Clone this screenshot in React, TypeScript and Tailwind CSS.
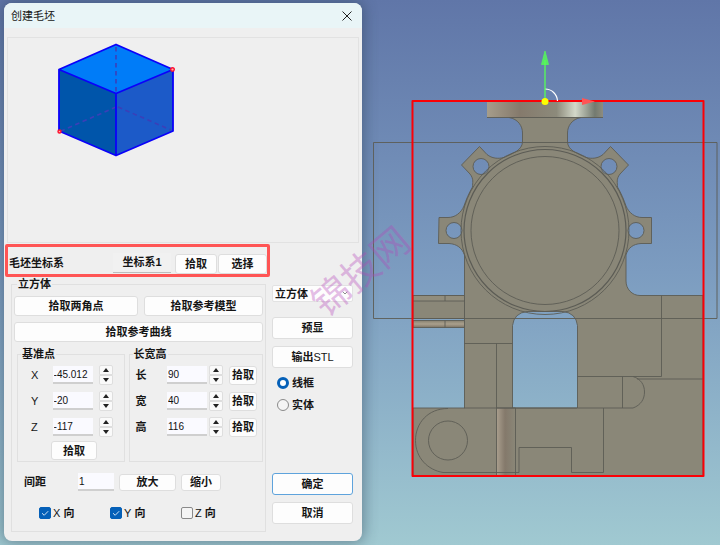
import { useState } from "react";
import type { ReactNode } from "react";
import { ChevronDown } from "lucide-react";
import clsx from "clsx";

type ButtonProps = {
  children: ReactNode;
  className?: string;
  primary?: boolean;
};

function Button({ children, className, primary }: ButtonProps) {
  return (
    <button
      type="button"
      className={clsx(
        "flex items-center justify-center rounded-[3px] border bg-[#fdfdfd] whitespace-nowrap",
        primary ? "border-[#5ea3dc]" : "border-[#dedede]",
        className,
      )}
    >
      {children}
    </button>
  );
}

type NumberFieldProps = {
  id: string;
  value: string;
  onChange: (value: string) => void;
  className?: string;
};

function NumberField({ id, value, onChange, className }: NumberFieldProps) {
  return (
    <input
      id={id}
      type="text"
      value={value}
      onChange={(e) => onChange(e.target.value)}
      className={clsx(
        "h-[18px] min-w-0 border-b-2 border-[#cfcfcf] bg-[#fafaff] px-px font-['Liberation_Sans_Narrow','Liberation_Sans',sans-serif] text-[10px] leading-4 font-normal text-[#111] outline-none",
        className,
      )}
    />
  );
}

function Spinner({ label, onStep }: { label: string; onStep: (delta: number) => void }) {
  return (
    <div className="flex h-5 w-[14px] shrink-0 flex-col">
      <button
        type="button"
        aria-label={`${label} +`}
        onClick={() => onStep(1)}
        className="flex flex-1 items-center justify-center rounded-t-[2px] border border-[#dedede] bg-[#fafafa]"
      >
        <svg viewBox="0 0 6 4" className="h-1 w-1.5">
          <path d="M0 4 3 0 6 4z" fill="#222" />
        </svg>
      </button>
      <button
        type="button"
        aria-label={`${label} -`}
        onClick={() => onStep(-1)}
        className="flex flex-1 items-center justify-center rounded-b-[2px] border border-[#dedede] bg-[#fafafa]"
      >
        <svg viewBox="0 0 6 4" className="h-1 w-1.5">
          <path d="M0 0 3 4 6 0z" fill="#222" />
        </svg>
      </button>
    </div>
  );
}

function Group({ title, children, className }: { title: string; children: ReactNode; className?: string }) {
  return (
    <fieldset className={clsx("min-w-0 border border-[#e0e0e0]", className)}>
      <legend className="ml-[3px] h-[14px] px-px leading-[14px]">{title}</legend>
      {children}
    </fieldset>
  );
}

function CubePreview() {
  return (
    <svg viewBox="50 40 130 120" className="mt-0.5 ml-[42px] h-[120px] w-[130px]">
      <path d="M59 69.5 116 44.5 173 69.5 116 93.5z" fill="#007cf8" />
      <path d="M59 69.5 116 93.5V155.5L59 131z" fill="#0055aa" />
      <path d="M116 93.5 173 69.5V131L116 155.5z" fill="#1c5ac8" />
      <path d="M116 47V93M116 107 61 131M118 107 171 130" stroke="#3b3fb8" strokeWidth="1.6" strokeDasharray="4.500 3.500" fill="none" />
      <path
        d="M116 44.500 173 69.500V131L116 155.500 59 131V69.500zM59 69.500 116 93.500 173 69.500M116 93.500V155.500"
        fill="none"
        stroke="#0a00fa"
        strokeWidth="1.800"
        strokeLinejoin="round"
      />
      <circle cx="172.500" cy="69.500" r="1.800" fill="#ffb0a0" stroke="#ff1030" strokeWidth="1.400" />
      <circle cx="59.500" cy="131.500" r="1.500" fill="#ffb0a0" stroke="#ff1030" strokeWidth="1.400" />
    </svg>
  );
}

function PartView() {
  return (
    <svg viewBox="362 0 358 545" className="block w-full">
      <defs>
        <linearGradient id="flange">
          <stop offset="0" stopColor="#a69d8b" />
          <stop offset="0.280" stopColor="#857a6c" />
          <stop offset="0.600" stopColor="#8c8a7b" />
          <stop offset="0.760" stopColor="#d3d8c9" />
          <stop offset="0.930" stopColor="#737a70" />
          <stop offset="1" stopColor="#8e8c7e" />
        </linearGradient>
        <linearGradient id="shaft">
          <stop offset="0" stopColor="#aa9f8e" />
          <stop offset="0.450" stopColor="#84796b" />
          <stop offset="1" stopColor="#8a8778" />
        </linearGradient>
        <linearGradient id="rod" x1="0" y1="0" x2="0" y2="1">
          <stop offset="0" stopColor="#87806f" />
          <stop offset="0.500" stopColor="#aaa08d" />
          <stop offset="1" stopColor="#7d7465" />
        </linearGradient>
      </defs>

      <g stroke="#5c5c55" strokeWidth="0.900">
        {/* casting outline with the four lug holes and the arch cut out */}
        <path
          fill="#8a8778"
          fillRule="evenodd"
          d="M509 117.500C518 119 522.500 126 522.500 133V142C522 150 514 153 504 157.500C498 159 492 158.500 487 154.500L479.500 146.500 461.500 165 470 174C474 179 472.500 183 472.500 187C469 193 466 200 464 206C461 213 455 217.500 448 217.500H439L438.500 243.500H449C457 244 462 248 464.500 255V408H413V476H703V295.500H640C632 295.500 626 289 626 281V255C628 248 633 244 641 243.500H651.500V217.500H642C635 217.500 629 213 626 206C624 200 621 193 617.500 187C617.500 183 616 179 620 174L628.500 165 610.500 146.500 603 154.500C598 158.500 592 159 586 157.500C576 153 568 150 567.500 142V133C567.500 126 572 119 581 117.500z
             M473 166.500a8 8 0 1 0 16 0a8 8 0 1 0-16 0z
             M601 166.500a8 8 0 1 0 16 0a8 8 0 1 0-16 0z
             M446 230.500a8 8 0 1 0 16 0a8 8 0 1 0-16 0z
             M628 230.500a8 8 0 1 0 16 0a8 8 0 1 0-16 0z
             M512.500 408V325.500Q514 313 527 311.500H563Q576 313 577.500 325.500V408z"
        />
        <path d="M487 102H603V117.500H487z" fill="url(#flange)" stroke="none" />
        <path d="M487 117.500H603" />
        <path d="M413 295.500H464.500V318.500H413z" fill="#8a8778" />
        <path d="M413 295.500H464.500V301H413z" fill="#918d7d" />
        <path d="M413 320.500H464.500V327.500H413z" fill="url(#rod)" />
        <path d="M445 295.500V301M445 320.500V327.500" fill="none" />
        <path d="M496.500 408H515.500V476H496.500z" fill="url(#shaft)" />
        <g fill="none">
          <circle cx="545" cy="230.500" r="84" />
          <circle cx="545" cy="230.500" r="81" strokeWidth="1.200" />
          <circle cx="545" cy="230.500" r="74" />
          <path d="M464.500 343.500H512.500M496.500 343.500V408M661.500 295.500V376.500H577.500M637 379H703M622.500 376.500V408M577.500 408H633C641 405 644.500 399 644.500 392S641 379 633 376.500" />
          <path d="M464 408H577M448 408.500C428 408.500 415.500 423 415.500 440.500S428 470 443 472.500H519V447.500H571.500V472.500H603.500V408" />
          <circle cx="448" cy="440.500" r="19.500" />
          <path d="M373.500 142.500H717V318.500H373.500z" />
        </g>
      </g>

      <path d="M412.500 101H703.500V476H412.500z" fill="none" stroke="#fb0006" strokeWidth="2" strokeLinejoin="round" />
      <path d="M545 89A12.500 12.500 0 0 1 557.500 101" fill="none" stroke="#fff" strokeWidth="1.200" />
      <path d="M545 101V60" stroke="#55ff55" strokeWidth="1.300" />
      <path d="M545 51 548.500 64.500H541.500z" fill="#55ff55" fillOpacity="0.800" stroke="#55ff55" strokeWidth="0.700" />
      <path d="M595 101.500 582 105V98z" fill="#ff5555" />
      <circle cx="545" cy="101.500" r="3.500" fill="#ffff00" />
    </svg>
  );
}

export default function App() {
  const [shape, setShape] = useState("立方体");
  const [mode, setMode] = useState("线框");
  const [coord, setCoord] = useState("坐标系1");
  const [gap, setGap] = useState("1");
  const [values, setValues] = useState<Record<string, string>>({
    X: "-45.012",
    Y: "-20",
    Z: "-117",
    长: "90",
    宽: "40",
    高: "116",
  });
  const [dirs, setDirs] = useState<Record<string, boolean>>({ X: true, Y: true, Z: false });

  const setValue = (key: string, value: string) => setValues({ ...values, [key]: value });
  const step = (key: string, delta: number) => setValue(key, String(Number(values[key]) + delta));

  return (
    <main className="relative flex min-h-screen items-start overflow-hidden bg-linear-to-b from-[#6076a8] via-[#7c9cc0] to-[#a0c9d1] pl-1 font-['Liberation_Sans','Noto_Sans_CJK_SC',sans-serif] text-[11px] leading-[14px] font-bold text-[#151515]">
      <section className="mt-[3px] min-w-0 flex-1 rounded-lg bg-[#efefef] pb-[9px] shadow-[0_0_14px_2px_rgba(40,60,80,0.45)]">
        <header className="flex h-[25px] items-center justify-between rounded-t-lg bg-[#e9f5f7] pr-2 pl-[7px] font-normal">
          <h1>创建毛坯</h1>
          <button type="button" aria-label="关闭" className="flex h-5 w-[14px] items-center justify-center">
            <svg viewBox="0 0 10 10" className="h-2.5 w-2.5">
              <path d="M0.500 0.500 9.500 9.500M9.500 0.500 0.500 9.500" stroke="#222" strokeWidth="1" />
            </svg>
          </button>
        </header>

        <div className="mx-[3px] mt-[9px] h-[206px] border border-[#e2e2e2]">
          <CubePreview />
        </div>

        <div className="mt-px mr-[92px] ml-px flex h-[33px] items-end rounded-[2px] border-[3px] border-[#ff5555] pl-px">
          <label htmlFor="coord" className="mb-1 flex-1">
            毛坯坐标系
          </label>
          <input
            id="coord"
            type="text"
            value={coord}
            onChange={(e) => setCoord(e.target.value)}
            className="mr-1 mb-px h-5 w-[58px] border-b border-[#bdbdbd] bg-[#f1f1f1] pb-1 text-center outline-none"
          />
          <Button className="mr-px h-5 w-[42px]">拾取</Button>
          <Button className="h-5 w-[49px]">选择</Button>
        </div>

        <div className="flex gap-1.5 pr-[9px] pl-[7px]">
          <Group title="立方体" className="flex-1 pr-0.5 pb-[11px] pl-0.5">
            <div className="grid grid-cols-[25fr_24fr] gap-1.5 pt-[5px]">
              <Button className="h-5">拾取两角点</Button>
              <Button className="h-5">拾取参考模型</Button>
              <Button className="col-span-2 h-5">拾取参考曲线</Button>
            </div>

            <div className="mt-[5px] grid grid-cols-[108fr_135fr] gap-1 pl-[3px]">
              <Group title="基准点" className="pb-px">
                <div className="flex flex-col gap-1.5 pt-1">
                  {["X", "Y", "Z"].map((axis) => (
                    <div key={axis} className="flex h-5 items-center pl-[13px]">
                      <label htmlFor={`base-${axis}`} className="flex-1 font-normal">
                        {axis}
                      </label>
                      <NumberField id={`base-${axis}`} value={values[axis]} onChange={(v) => setValue(axis, v)} className="mr-1.5 w-10" />
                      <div className="pr-[11px]">
                        <Spinner label={axis} onStep={(d) => step(axis, d)} />
                      </div>
                    </div>
                  ))}
                </div>
                <Button className="mt-1 ml-[33px] h-[19px] w-[46px]">拾取</Button>
              </Group>

              <Group title="长宽高" className="pb-px">
                <div className="flex flex-col gap-1.5 pt-1">
                  {["长", "宽", "高"].map((side) => (
                    <div key={side} className="flex h-5 items-center pr-[5px] pl-1.5">
                      <label htmlFor={`size-${side}`} className="flex-1">
                        {side}
                      </label>
                      <NumberField id={`size-${side}`} value={values[side]} onChange={(v) => setValue(side, v)} className="mr-0.5 w-10" />
                      <Spinner label={side} onStep={(d) => step(side, d)} />
                      <Button className="ml-1.5 h-[19px] w-7">拾取</Button>
                    </div>
                  ))}
                </div>
              </Group>
            </div>

            <div className="mt-[11px] flex h-[18px] items-center pl-2.5">
              <label htmlFor="gap" className="w-[54px]">
                间距
              </label>
              <NumberField id="gap" value={gap} onChange={setGap} className="w-9" />
              <Button className="ml-[5px] h-[17px] w-[57px]">放大</Button>
              <Button className="ml-[5px] h-[17px] w-10">缩小</Button>
            </div>

            <div className="mt-[15px] flex h-[14px] pl-[25px]">
              {["X", "Y", "Z"].map((axis) => (
                <label key={axis} className="flex w-[71px] items-center gap-0.5">
                  <span className="relative flex h-3 w-3">
                    <input
                      type="checkbox"
                      checked={dirs[axis]}
                      onChange={() => setDirs({ ...dirs, [axis]: !dirs[axis] })}
                      className="h-3 w-3 appearance-none rounded-[2px] border border-[#8a8a8a] bg-[#f5f5f5] checked:border-[#0560b8] checked:bg-[#0560b8]"
                    />
                    {dirs[axis] && (
                      <svg viewBox="0 0 12 12" className="pointer-events-none absolute inset-0 h-3 w-3">
                        <path d="M3 6.200 5.200 8.300 9.200 4.200" fill="none" stroke="#cfe3f5" strokeWidth="1" />
                      </svg>
                    )}
                  </span>
                  <span>
                    <span className="font-normal">{axis}</span> 向
                  </span>
                </label>
              ))}
            </div>
          </Group>

          <div className="flex w-[81px] flex-col pt-2">
            <div className="relative">
              <select
                aria-label="形状"
                value={shape}
                onChange={(e) => setShape(e.target.value)}
                className="block h-[17px] w-full appearance-none rounded-[2px] border border-[#e2e2e2] bg-[#fdfdfd] pl-0.5 outline-none"
              >
                <option>立方体</option>
                <option>圆柱体</option>
              </select>
              <ChevronDown className="pointer-events-none absolute top-1 right-1 h-2 w-2 text-[#555]" />
            </div>
            <Button className="mt-[15px] h-[22px]">预显</Button>
            <Button className="mt-[7px] h-[22px]">
              输出<span className="font-normal">STL</span>
            </Button>

            <div className="mt-2 flex flex-col gap-2 pl-[5px]">
              {["线框", "实体"].map((name) => (
                <label key={name} className="flex items-center gap-[3px]">
                  <input
                    type="radio"
                    name="mode"
                    checked={mode === name}
                    onChange={() => setMode(name)}
                    className="h-3 w-3 appearance-none rounded-full border border-[#8a8a8a] bg-[#f5f5f5] checked:border-[3px] checked:border-[#0560b8] checked:bg-white"
                  />
                  {name}
                </label>
              ))}
            </div>

            <Button primary className="mt-[61px] h-[22px]">
              确定
            </Button>
            <Button className="mt-[7px] h-[22px]">取消</Button>
          </div>
        </div>
      </section>

      <div className="min-w-0 flex-1">
        <PartView />
      </div>

      <p className="pointer-events-none absolute top-[253px] left-[304px] -rotate-40 text-[38px] leading-[38px] font-normal whitespace-nowrap text-[#b446b9]/35">
        锦技网
      </p>
    </main>
  );
}
